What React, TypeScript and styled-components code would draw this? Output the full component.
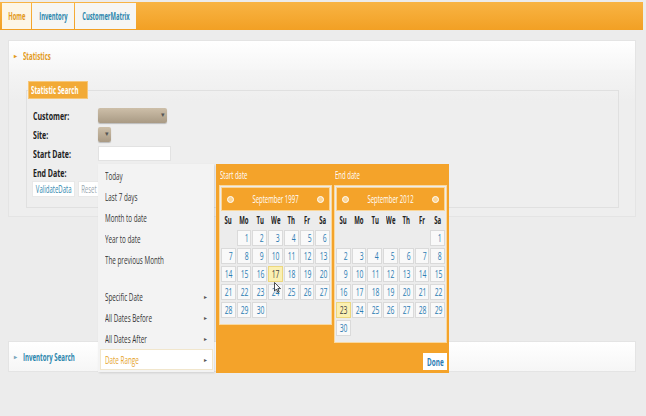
import styled, { createGlobalStyle } from "styled-components";

const GlobalStyle = createGlobalStyle`
    html, body {
        margin: 0;
        padding: 0;
        background: #ececec;
        font-family: "Open Sans", "Liberation Sans", sans-serif;
        font-size: 10px;
        color: #333;
    }
`;

// the screenshot's type is narrow, so each text run is squeezed sideways
const T = styled.span<{ $o?: string; $s?: number }>`
    display: inline-block;
    white-space: nowrap;
    transform: scaleX(${(p) => p.$s ?? 0.6});
    transform-origin: ${(p) => p.$o ?? "left"} center;
`;

const Page = styled.div`
    position: relative;
    width: 646px;
    height: 416px;
    padding-top: 2px;
    box-sizing: border-box;
    overflow: hidden;
`;

const TabBar = styled.div`
    display: flex;
    gap: 1px;
    height: 28px;
    margin-right: 3px;
    padding: 1px 0 1px 2px;
    box-sizing: border-box;
    background: linear-gradient(#f8b444, #f2a024);
`;

const Tab = styled.div<{ $active?: boolean; $w: number }>`
    display: flex;
    align-items: center;
    justify-content: center;
    width: ${(p) => p.$w}px;
    background: ${(p) => (p.$active ? "#fdf6e6" : "#f6f6f4")};
    color: ${(p) => (p.$active ? "#e39a1c" : "#2b86ad")};
    font-weight: bold;
    font-size: 10px;
`;

const Panel = styled.section<{ $top: number }>`
    margin: ${(p) => p.$top}px 10px 0 8px;
    border: 1px solid #e4e4e4;
    background: linear-gradient(#fafafa, #eeeeee 60px);
`;

const PanelHeader = styled.div<{ $blue?: boolean }>`
    display: flex;
    align-items: center;
    gap: 6px;
    height: 29px;
    padding-left: 5px;
    background: linear-gradient(#ffffff, #f6f6f6);
    color: ${(p) => (p.$blue ? "#2b86ad" : "#e39a1c")};
    font-weight: bold;
    font-size: 10.5px;
`;

const Bullet = styled.span<{ $blue?: boolean }>`
    font-size: 6px;
    color: ${(p) => (p.$blue ? "#7aa6bb" : "#e39a1c")};
`;

const PanelBody = styled.div`
    padding: 12px 16px 8px 17px;
`;

const FieldSet = styled.fieldset`
    margin: 0;
    padding: 0 0 10px 2px;
    border: 1px solid #e0e0e0;
`;

const Legend = styled.legend`
    width: 58px;
    padding: 0 0 0 2px;
    box-sizing: border-box;
    height: 16px;
    line-height: 16px;
    background: #f2aa36;
    color: #fff;
    font-weight: bold;
    font-size: 11px;
    box-shadow: 0 0 0 1px #f6c77a;
`;

const FormGrid = styled.div`
    display: grid;
    grid-template-columns: 65px 1fr;
    grid-auto-rows: 19px;
    align-items: center;
    margin: 8px 0 0 4px;
`;

const Label = styled.span`
    font-weight: bold;
    font-size: 11px;
    color: #222;
`;

const Select = styled.div<{ $w: number }>`
    position: relative;
    width: ${(p) => p.$w}px;
    height: 15px;
    border-radius: 2px;
    background: linear-gradient(#cdbfa9, #a99a84);
    box-shadow: 0 1px 1px #bbb;
    &::after {
        content: "▾";
        position: absolute;
        right: 2px;
        top: 2px;
        font-size: 7px;
        color: #555;
    }
`;

const Input = styled.div`
    width: 71px;
    height: 13px;
    background: #fff;
    border: 1px solid #e2e2e2;
`;

const ButtonRow = styled.div`
    display: flex;
    gap: 3px;
    margin: -1px 0 0 3px;
`;

const Button = styled.div<{ $muted?: boolean; $w: number }>`
    display: flex;
    align-items: center;
    justify-content: center;
    width: ${(p) => p.$w}px;
    height: 14px;
    background: #fff;
    border: 1px solid #e8e8e8;
    color: ${(p) => (p.$muted ? "#9aa8b0" : "#2b86ad")};
    font-size: 10px;
`;

const Popup = styled.div`
    position: absolute;
    left: 98px;
    top: 164px;
    display: flex;
    gap: 2px;
    align-items: flex-start;
`;

const Menu = styled.ul`
    width: 116px;
    height: 208px;
    margin: 0;
    padding: 1px 0 0;
    box-sizing: border-box;
    list-style: none;
    background: #f3f3f3;
    box-shadow: 1px 1px 2px rgba(0, 0, 0, 0.12);
`;

const MenuItem = styled.li<{ $active?: boolean; $arrow?: boolean }>`
    display: flex;
    align-items: center;
    justify-content: space-between;
    height: 21px;
    margin: 0 1px 0 2px;
    padding: 0 5px 0 4px;
    box-sizing: border-box;
    font-size: 10.5px;
    color: ${(p) => (p.$active ? "#e6a32c" : "#333")};
    background: ${(p) => (p.$active ? "#fff" : "transparent")};
    border: 1px solid ${(p) => (p.$active ? "#f1e6cc" : "transparent")};
    &::after {
        content: "${(p) => (p.$arrow ? "▸" : "")}";
        font-size: 6px;
        color: #555;
    }
`;

const MenuGap = styled.li`
    height: 16px;
`;

const CalPanel = styled.div`
    display: flex;
    flex-direction: column;
    width: 233px;
    height: 209px;
    padding: 0 2px 3px 3px;
    box-sizing: border-box;
    background: #f4a32a;
`;

const CalTitles = styled.div`
    display: flex;
    gap: 2px;
    height: 21px;
    align-items: center;
`;

const CalTitle = styled.span`
    width: 113px;
    padding-left: 1px;
    color: #fff;
    font-size: 10px;
`;

const CalRow = styled.div`
    display: flex;
    gap: 2px;
    align-items: flex-start;
`;

const Calendar = styled.div`
    width: 113px;
    box-sizing: border-box;
    padding: 1px 1px 5px;
    background: #ececec;
    border: 1px solid #f9d9a0;
`;

const CalHeader = styled.div`
    display: flex;
    align-items: center;
    justify-content: space-between;
    height: 24px;
    padding: 0 5px;
    box-sizing: border-box;
    background: #f4a32a;
    border: 1px solid #fbd596;
    color: #fff;
    font-size: 10px;
`;

const MonthName = styled.span`
    display: flex;
    justify-content: center;
    flex: 1;
`;

const NavDot = styled.span`
    width: 5px;
    height: 5px;
    border-radius: 50%;
    border: 1px solid #fff;
    background: #fbd596;
`;

const DayGrid = styled.div`
    display: grid;
    grid-template-columns: repeat(7, minmax(0, 1fr));
    grid-auto-rows: 18px;
    column-gap: 1px;
    align-items: center;
`;

const DayName = styled.span`
    display: flex;
    justify-content: center;
    align-items: center;
    height: 25px;
    font-weight: bold;
    font-size: 10px;
    color: #222;
`;

const DayCell = styled.span<{ $on?: boolean }>`
    display: flex;
    justify-content: flex-end;
    align-items: center;
    height: 14px;
    padding-right: 2px;
    overflow: hidden;
    font-size: 10px;
    color: ${(p) => (p.$on ? "#444" : "#2b7cb3")};
    background: ${(p) => (p.$on ? "#fbf0b2" : "#f9f9f9")};
    border: 1px solid ${(p) => (p.$on ? "#ecd77e" : "#dadada")};
`;

const Blank = styled.span``;

const DoneRow = styled.div`
    display: flex;
    justify-content: flex-end;
    margin-top: auto;
`;

const Done = styled.div`
    display: flex;
    align-items: center;
    justify-content: center;
    width: 24px;
    height: 17px;
    background: #fff;
    color: #2b7cb3;
    font-weight: bold;
    font-size: 11px;
`;

const Cursor = styled.svg`
    position: absolute;
    left: 274px;
    top: 282px;
`;

const dayNames = ["Su", "Mo", "Tu", "We", "Th", "Fr", "Sa"];

function Month({ title, offset, days, selected }: { title: string; offset: number; days: number; selected: number }) {
    const cells = [];
    for (let i = 0; i < offset; i++) cells.push(<Blank key={"b" + i} />);
    for (let d = 1; d <= days; d++) {
        cells.push(
            <DayCell key={d} $on={d === selected}>
                <T $o="right" $s={0.68}>{d}</T>
            </DayCell>
        );
    }
    return (
        <Calendar>
            <CalHeader>
                <NavDot />
                <MonthName>
                    <T $o="center">{title}</T>
                </MonthName>
                <NavDot />
            </CalHeader>
            <DayGrid>
                {dayNames.map((n) => (
                    <DayName key={n}>
                        <T $o="center">{n}</T>
                    </DayName>
                ))}
                {cells}
            </DayGrid>
        </Calendar>
    );
}

const menuItems = ["Today", "Last 7 days", "Month to date", "Year to date", "The previous Month"];
const rangeItems = ["Specific Date", "All Dates Before", "All Dates After"];

export default function App() {
    return (
        <Page>
            <GlobalStyle />
            <TabBar>
                <Tab $active $w={29}><T $o="center" $s={0.58}>Home</T></Tab>
                <Tab $w={42}><T $o="center" $s={0.58}>Inventory</T></Tab>
                <Tab $w={61}><T $o="center" $s={0.58}>CustomerMatrix</T></Tab>
            </TabBar>

            <Panel $top={10}>
                <PanelHeader>
                    <Bullet>▸</Bullet>
                    <T $s={0.58}>Statistics</T>
                </PanelHeader>
                <PanelBody>
                    <FieldSet>
                        <Legend><T $s={0.56}>Statistic Search</T></Legend>
                        <FormGrid>
                            <Label><T $s={0.64}>Customer:</T></Label>
                            <Select $w={69} />
                            <Label><T $s={0.64}>Site:</T></Label>
                            <Select $w={13} />
                            <Label><T $s={0.64}>Start Date:</T></Label>
                            <Input />
                            <Label><T $s={0.64}>End Date:</T></Label>
                            <Input />
                        </FormGrid>
                        <ButtonRow>
                            <Button $w={41}><T $o="center">ValidateData</T></Button>
                            <Button $muted $w={19}><T $o="center">Reset</T></Button>
                        </ButtonRow>
                    </FieldSet>
                </PanelBody>
            </Panel>

            <Panel $top={124}>
                <PanelHeader $blue>
                    <Bullet $blue>▸</Bullet>
                    <T $s={0.58}>Inventory Search</T>
                </PanelHeader>
            </Panel>

            <Popup>
                <Menu>
                    {menuItems.map((m) => (
                        <MenuItem key={m}><T>{m}</T></MenuItem>
                    ))}
                    <MenuGap />
                    {rangeItems.map((m) => (
                        <MenuItem key={m} $arrow><T>{m}</T></MenuItem>
                    ))}
                    <MenuItem $arrow $active><T>Date Range</T></MenuItem>
                </Menu>
                <CalPanel>
                    <CalTitles>
                        <CalTitle><T>Start date</T></CalTitle>
                        <CalTitle><T>End date</T></CalTitle>
                    </CalTitles>
                    <CalRow>
                        <Month title="September 1997" offset={1} days={30} selected={17} />
                        <Month title="September 2012" offset={6} days={30} selected={23} />
                    </CalRow>
                    <DoneRow>
                        <Done><T $o="center" $s={0.58}>Done</T></Done>
                    </DoneRow>
                </CalPanel>
            </Popup>

            <Cursor width="7" height="11" viewBox="0 0 7 11">
                <path d="M0.5 0.5 L0.5 9 L2.5 7 L4 10.5 L5.2 10 L3.8 6.6 L6.5 6.6 Z" fill="#fff" stroke="#222" strokeWidth="0.8" />
            </Cursor>
        </Page>
    );
}
